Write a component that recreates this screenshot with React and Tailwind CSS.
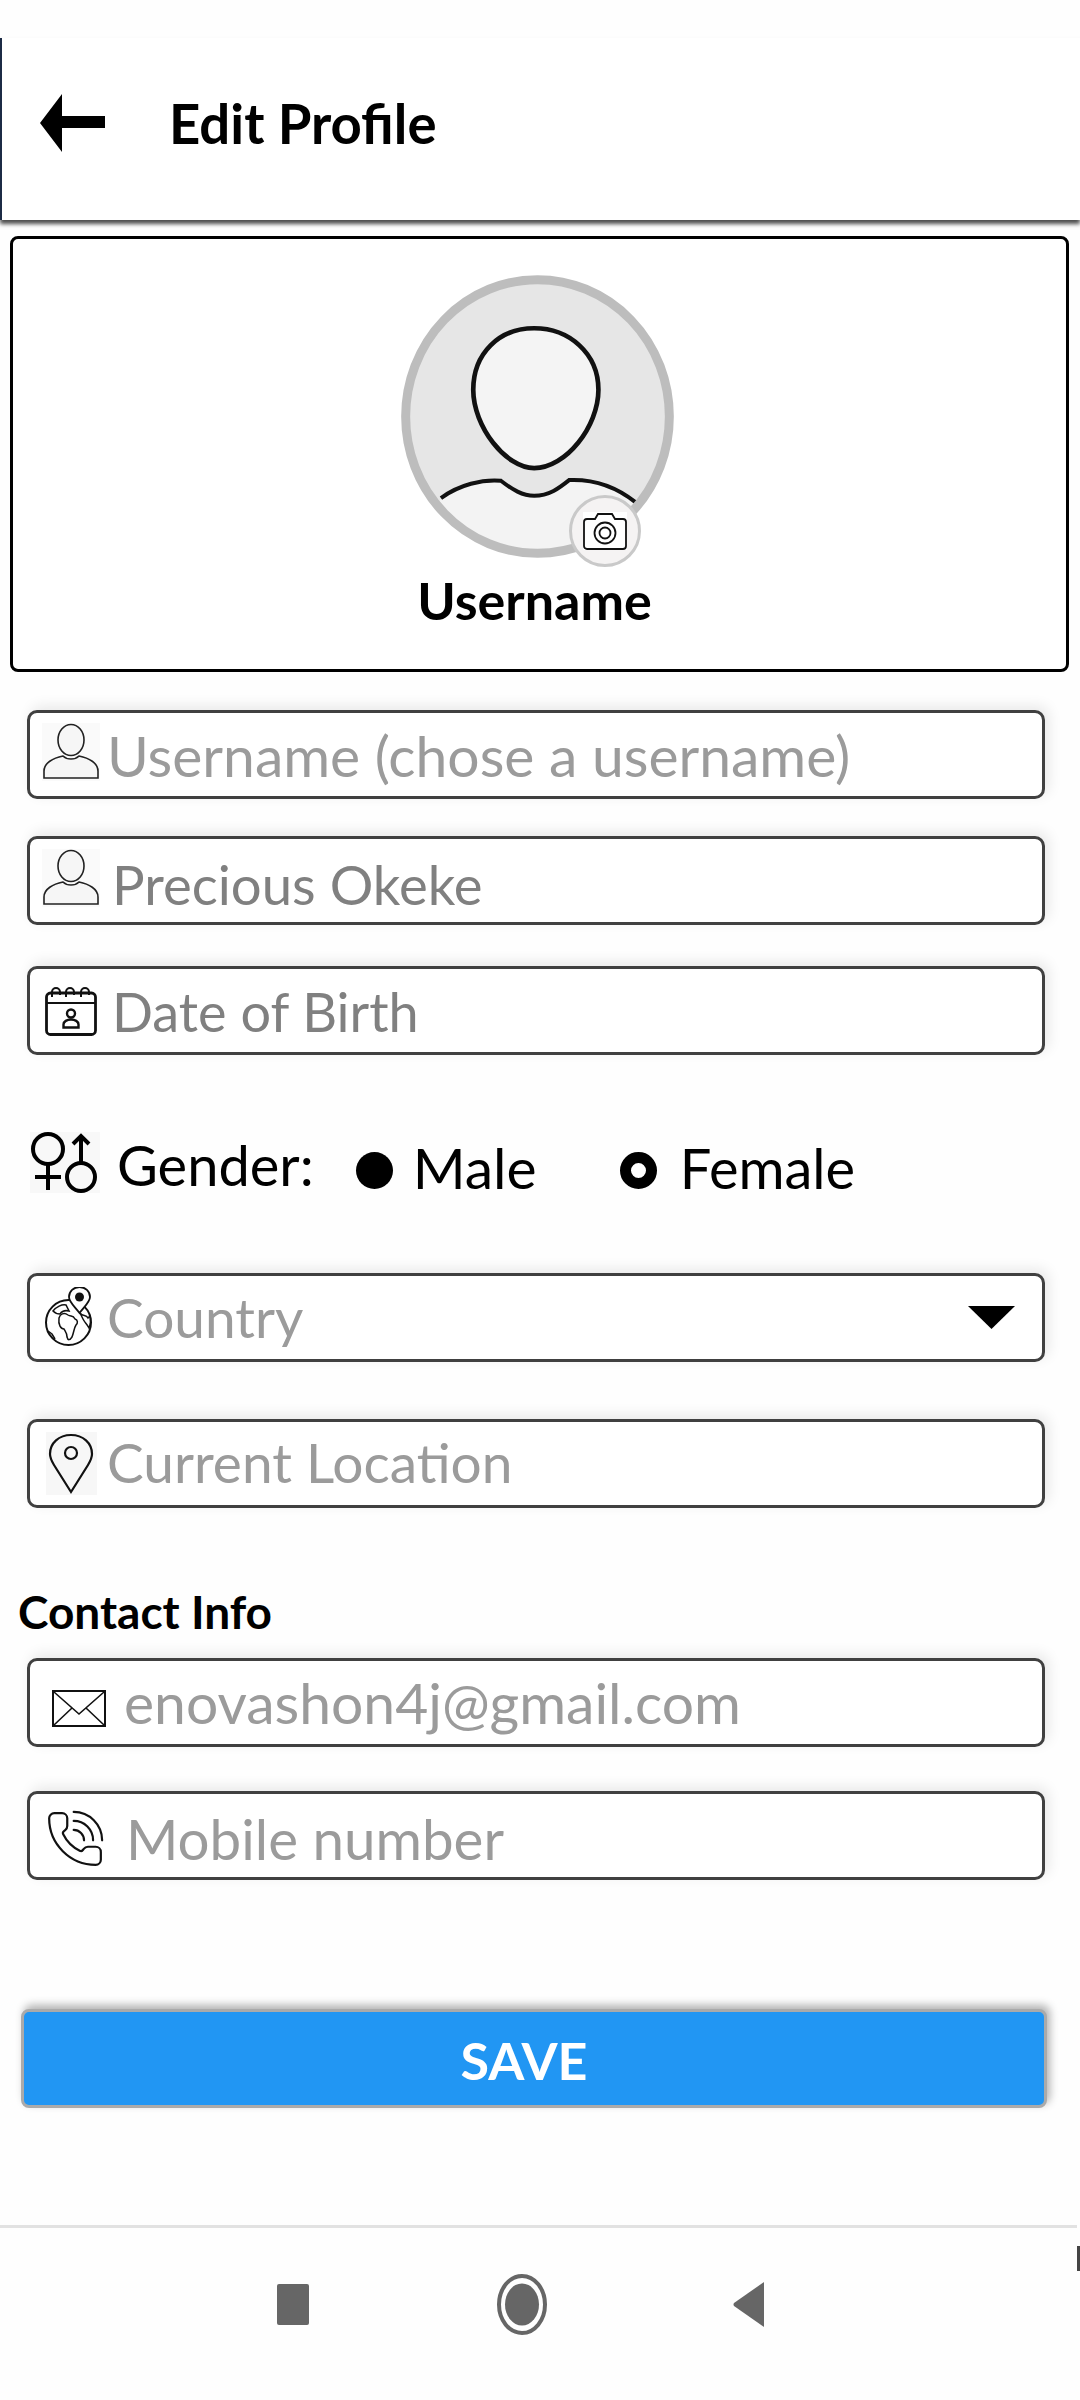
const PLACEHOLDER = 'text-[#9b9b9b]';

function UserIcon() {
  return (
    <svg width="58" height="58" viewBox="0 0 58 58" className="shrink-0">
      <rect width="58" height="58" fill="#fafafa" />
      <path d="M2 55 V48 C2 40 11 35 21 33 C25 37 33 37 37 33 C47 35 56 40 56 48 V55 Z" fill="#f6f6f6" stroke="#222" strokeWidth="1.6" />
      <ellipse cx="29" cy="17" rx="13" ry="15.5" fill="#f6f6f6" stroke="#222" strokeWidth="1.6" />
    </svg>
  );
}

function CalendarIcon() {
  return (
    <svg width="52" height="50" viewBox="0 0 52 50" className="shrink-0" fill="none" stroke="#111">
      <rect x="1.5" y="7" width="49" height="41.5" rx="4" strokeWidth="2.8" />
      <path d="M2 17 H50" strokeWidth="2" />
      <path d="M7 11 V6 A4 4 0 0 1 15 6 M21 11 V6 A4 4 0 0 1 29 6 M36 11 V6 A4 4 0 0 1 44 6 M15 6 V9 M29 6 V9 M44 6 V9" strokeWidth="2" />
      <circle cx="26" cy="27.5" r="4" strokeWidth="2.4" />
      <path d="M18.5 41.5 V38.5 C18.5 35.5 22 33.5 26 33.5 C30 33.5 33.5 35.5 33.5 38.5 V41.5 Z" strokeWidth="2.4" />
    </svg>
  );
}

function GenderIcon() {
  return (
    <svg width="70" height="61" viewBox="0 0 70 61" className="shrink-0" fill="none" stroke="#000" strokeWidth="4">
      <rect width="70" height="61" fill="#f8f8f8" stroke="none" />
      <circle cx="18" cy="17" r="15" />
      <path d="M18 32 V58 M5 45 H31" />
      <circle cx="51" cy="45" r="14" />
      <path d="M51 31 V4 M43 12 L51 4 L59 12" />
    </svg>
  );
}

function GlobeIcon() {
  return (
    <svg width="48" height="60" viewBox="0 0 48 60" className="shrink-0" fill="none" stroke="#111" strokeWidth="1.5">
      <circle cx="23.500" cy="35.500" r="22.500" strokeWidth="2" />
      <path d="M14 31 C15 27 19 25 23 28 C26 30 28 28 30 32 C33 33 33 36 31 38 C29 41 29 45 27 50 C25 53 23 54 22 50 C22 46 20 44 19 42 C16 42 13 38 14 31 Z" />
      <path d="M8 24 C11 20 17 17 21 18 L24 24 C20 23 17 24 15 27 C12 27 10 26 8 24 Z" />
      <path d="M35 26 C38 30 41 27 43 31 L45 29 C46 33 46 36 44 41 C42 37 40 36 38 32 Z" />
      <path d="M3 44 L7 47 L10 52" />
      <path d="M34.500 26 C30 20 24 15 24 10 A10.500 10 0 0 1 45 10 C45 15 39 20 34.500 26 Z" fill="#fff" strokeWidth="1.8" />
      <circle cx="34.500" cy="10" r="4.500" fill="#111" stroke="none" />
    </svg>
  );
}

function PinIcon() {
  return (
    <svg width="51" height="63" viewBox="0 0 51 63" className="shrink-0" fill="none" stroke="#111">
      <rect width="51" height="63" fill="#f7f7f7" stroke="none" />
      <path d="M25 60 L8 33 C5 28 4 25 4 22 C4 11 13 3 25 3 C37 3 46 11 46 22 C46 25 45 28 42 33 Z" strokeWidth="2.2" />
      <circle cx="25" cy="21" r="6" strokeWidth="2.2" />
    </svg>
  );
}

function MailIcon() {
  return (
    <svg width="54" height="37" viewBox="0 0 54 37" className="shrink-0" fill="none" stroke="#111">
      <rect x="1" y="1" width="52" height="35" strokeWidth="2" />
      <path d="M2 2 L27 24 L52 2 M2 35 L20 18 M52 35 L34 18" strokeWidth="1.6" />
    </svg>
  );
}

function PhoneIcon() {
  return (
    <svg width="62" height="62" viewBox="0 0 24 24" className="shrink-0" fill="none" stroke="#111" strokeWidth="0.85" strokeLinecap="round" strokeLinejoin="round">
      <path d="M13.832 16.568a1 1 0 0 0 1.213-.303l.355-.465A2 2 0 0 1 17 15h3a2 2 0 0 1 2 2v3a2 2 0 0 1-2 2A18 18 0 0 1 2 4a2 2 0 0 1 2-2h3a2 2 0 0 1 2 2v3a2 2 0 0 1-.8 1.6l-.468.351a1 1 0 0 0-.292 1.233 14 14 0 0 0 6.392 6.384" />
      <path d="M11.500 1.500a11 11 0 0 1 11 11 M11.500 5a7.500 7.500 0 0 1 7.500 7.500 M11.500 8.500a4 4 0 0 1 4 4" />
    </svg>
  );
}

function Field({ className, children }) {
  return (
    <div className={`flex h-[89px] w-[1018px] ml-[27px] items-center rounded-[10px] border-[3px] border-[#404040] bg-white font-['Lato',sans-serif] leading-none shadow-[4px_-4px_14px_rgba(0,0,0,0.09)] ${className}`}>
      {children}
    </div>
  );
}

function Avatar() {
  return (
    <div className="relative h-[283px] w-[273px] -translate-x-[2px]">
      <svg width="273" height="283" viewBox="95 75 820 850">
        <defs>
          <clipPath id="avatar-clip">
            <ellipse cx="505" cy="500" rx="396" ry="411" />
          </clipPath>
        </defs>
        <ellipse cx="505" cy="500" rx="396" ry="411" fill="#e6e6e6" />
        <path clipPath="url(#avatar-clip)" d="M215 745 C270 705 340 688 395 693 C430 720 460 738 495 738 C540 738 570 715 600 691 C670 688 740 710 800 758 L850 950 L150 950 Z" fill="#f3f3f3" />
        <path d="M215 745 C270 705 340 688 395 693 C430 720 460 738 495 738 C540 738 570 715 600 691 C670 688 740 710 800 758" fill="none" stroke="#111" strokeWidth="12" />
        <path d="M495 235 C600 235 688 310 688 420 C688 530 590 655 495 655 C410 655 312 530 312 420 C312 310 390 235 495 235 Z" fill="#f4f4f4" stroke="#111" strokeWidth="14" />
        <ellipse cx="505" cy="500" rx="396" ry="411" fill="none" stroke="#bdbdbd" strokeWidth="27" />
      </svg>
      <div className="absolute left-[168px] top-[220px] flex h-[72px] w-[72px] items-center justify-center rounded-full border-[3px] border-[#c9c9c9] bg-[#f5f3f3]">
        <svg width="44" height="38" viewBox="0 0 44 38" fill="none" stroke="#111" strokeWidth="1.8">
          <rect width="44" height="38" fill="#fff" stroke="none" />
          <path d="M4 7 H12 L15 2 H29 L32 7 H40 A3 3 0 0 1 43 10 V34 A3 3 0 0 1 40 37 H4 A3 3 0 0 1 1 34 V10 A3 3 0 0 1 4 7 Z" />
          <circle cx="22" cy="21" r="10.500" />
          <circle cx="22" cy="21" r="5.500" />
        </svg>
      </div>
    </div>
  );
}

export default function App() {
  return (
    <div className="h-[2400px] w-[1080px] overflow-hidden bg-[#fefefe] font-['Lato',sans-serif]">
      <header className="pt-[38px]">
        <div className="flex h-[182px] items-center border-l-2 border-[#1c2b45] bg-white pb-[12px] shadow-[0_4px_4px_rgba(0,0,0,0.7)]">
          <svg width="65" height="58" viewBox="0 0 65 58" className="ml-[38px] shrink-0">
            <path d="M0 29 L22 0 V22 H65 V34 H22 V58 Z" fill="#000" />
          </svg>
          <h1 className="ml-[64px] text-[54.500px] font-bold leading-none text-black">Edit Profile</h1>
        </div>
      </header>

      <section className="ml-[10px] mt-[16px] flex h-[436px] w-[1059px] flex-col items-center rounded-[8px] border-[3px] border-black bg-white pt-[36px]">
        <Avatar />
        <div className="mt-[16px] -translate-x-[5px] text-[52px] font-bold leading-none text-black">Username</div>
      </section>

      <Field className="mt-[38px]">
        <span className="ml-[12px] -translate-y-[3px]"><UserIcon /></span>
        <span className={`ml-[7px] translate-y-[1px] text-[57px] ${PLACEHOLDER}`}>Username (chose a username)</span>
      </Field>
      <Field className="mt-[37px]">
        <span className="ml-[12px] -translate-y-[3px]"><UserIcon /></span>
        <span className="ml-[12px] translate-y-[4px] text-[54.500px] text-[#808080]">Precious Okeke</span>
      </Field>
      <Field className="mt-[41px]">
        <span className="ml-[15px]"><CalendarIcon /></span>
        <span className="ml-[15px] translate-y-[1px] text-[54px] text-[#808080]">Date of Birth</span>
      </Field>

      <div className="ml-[30px] mt-[77px] flex h-[61px] items-center leading-none text-black">
        <GenderIcon />
        <span className="ml-[17px] translate-y-[2px] text-[56px]">Gender:</span>
        <span className="ml-[42px] h-[37px] w-[37px] translate-y-[8px] rounded-full bg-black" />
        <span className="ml-[20px] translate-y-[5px] text-[57px]">Male</span>
        <span className="ml-[83px] h-[37px] w-[37px] translate-y-[8px] rounded-full border-[11px] border-black bg-white" />
        <span className="ml-[23px] translate-y-[5px] text-[56px]">Female</span>
      </div>

      <Field className="mt-[80px]">
        <span className="ml-[15px] -translate-y-[1px]"><GlobeIcon /></span>
        <span className={`ml-[14px] flex-1 text-[55px] ${PLACEHOLDER}`}>Country</span>
        <svg width="47" height="23" viewBox="0 0 47 23" className="mr-[27px] shrink-0">
          <path d="M0 0 H47 L23.500 23 Z" fill="#000" />
        </svg>
      </Field>
      <Field className="mt-[57px]">
        <span className="ml-[16px]"><PinIcon /></span>
        <span className={`ml-[10px] -translate-y-[1px] text-[55px] ${PLACEHOLDER}`}>Current Location</span>
      </Field>

      <div className="ml-[18px] mt-[79px] flex h-[50px] items-center text-[46px] font-bold leading-none text-black">Contact Info</div>

      <Field className="mt-[21px]">
        <span className="ml-[22px] translate-y-[6px]"><MailIcon /></span>
        <span className={`ml-[18px] text-[57px] ${PLACEHOLDER}`}>enovashon4j@gmail.com</span>
      </Field>
      <Field className="mt-[44px]">
        <span className="ml-[14px] translate-y-[3px]"><PhoneIcon /></span>
        <span className={`ml-[20px] translate-y-[3px] text-[56.500px] ${PLACEHOLDER}`}>Mobile number</span>
      </Field>

      <button className="ml-[21px] mt-[129px] flex h-[99px] w-[1026px] items-center justify-center rounded-[8px] border-[3px] border-[#aaaaaa] bg-[#2196f3] text-[52px] font-bold leading-none text-white shadow-[3px_-4px_9px_rgba(0,0,0,0.3)]">
        <span className="-translate-x-[10px] translate-y-[1px]">SAVE</span>
      </button>

      <div className="mt-[117px] h-[3px] w-[1077px] bg-[#e2e2e2]" />

      <nav className="relative flex items-center pt-[46px]">
        <span className="ml-[277px] h-[41px] w-[32px] rounded-[2px] bg-[#666666]" />
        <svg width="50" height="61" viewBox="0 0 50 61" className="ml-[188px] shrink-0">
          <ellipse cx="25" cy="30.500" rx="23" ry="28.500" fill="none" stroke="#666" strokeWidth="4" />
          <ellipse cx="25" cy="30.500" rx="17" ry="21" fill="#666" />
        </svg>
        <svg width="31" height="45" viewBox="0 0 31 45" className="ml-[186px] shrink-0">
          <path d="M31 0 V45 L1 24 Q0 22.500 1 21 Z" fill="#666" />
        </svg>
        <span className="absolute right-0 top-[18px] h-[25px] w-[3px] bg-[#444]" />
      </nav>
    </div>
  );
}
